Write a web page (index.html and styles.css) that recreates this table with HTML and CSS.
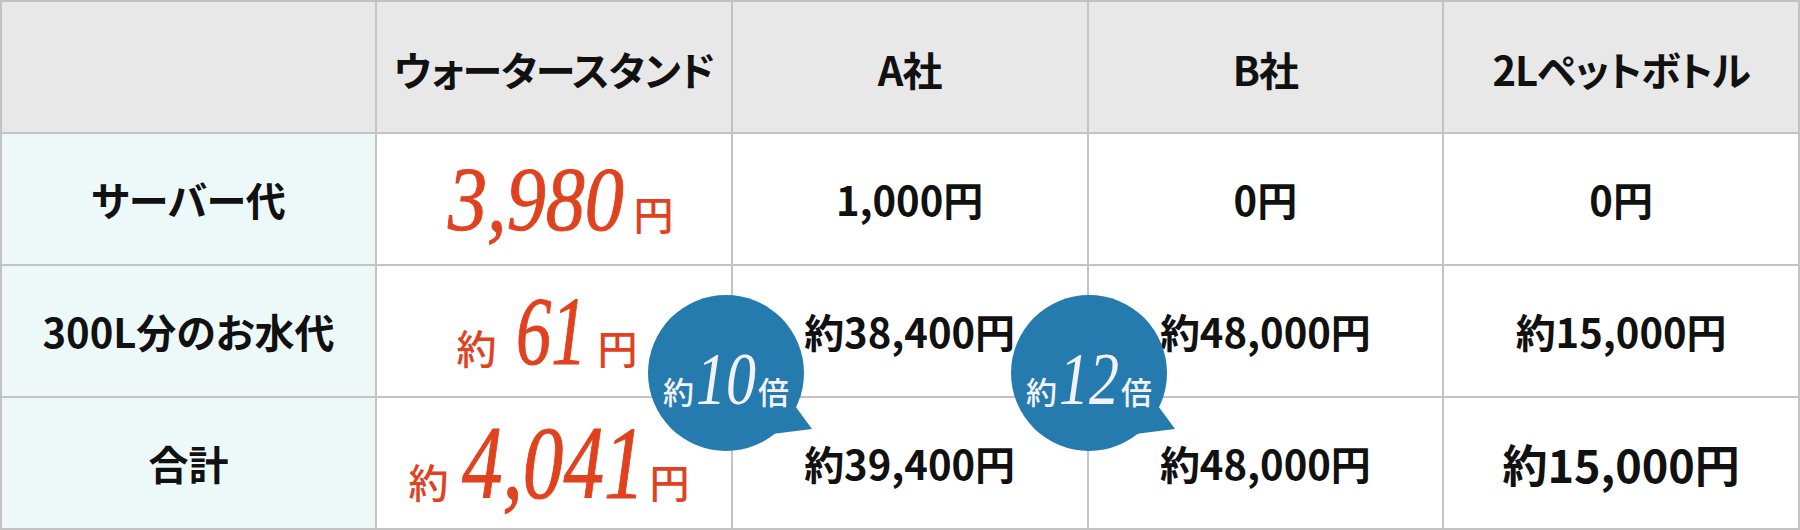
FILE: index.html
```html
<!DOCTYPE html>
<html lang="ja">
<head>
<meta charset="utf-8">
<title>比較表</title>
<link rel="stylesheet" href="styles.css">
</head>
<body>
<div class="wrap">
  <div class="table">
    <div class="cell head"></div>
    <div class="cell head">ウォータースタンド</div>
    <div class="cell head">A社</div>
    <div class="cell head">B社</div>
    <div class="cell head">2Lペットボトル</div>

    <div class="cell label">サーバー代</div>
    <div class="cell hl hl1"><span class="amt"><span class="num n1">3,980</span><span class="yen">円</span></span></div>
    <div class="cell">1,000円</div>
    <div class="cell">0円</div>
    <div class="cell">0円</div>

    <div class="cell label">300L分のお水代</div>
    <div class="cell hl hl2"><span class="amt"><span class="yaku">約</span><span class="num n2">61</span><span class="yen">円</span></span></div>
    <div class="cell">約38,400円</div>
    <div class="cell">約48,000円</div>
    <div class="cell">約15,000円</div>

    <div class="cell label">合計</div>
    <div class="cell hl hl3"><span class="amt"><span class="yaku y3">約</span><span class="num n3">4,041</span><span class="yen">円</span></span></div>
    <div class="cell">約39,400円</div>
    <div class="cell">約48,000円</div>
    <div class="cell big">約15,000円</div>
  </div>

  <div class="bubble b1">
    <svg class="bubble-bg" width="170" height="160" viewBox="0 0 170 160"><circle cx="78" cy="78" r="78"/><polygon points="142,104 164,134 124,139"/></svg>
    <div class="bubble-text"><span class="bk">約</span><span class="bn">10</span><span class="bk">倍</span></div>
  </div>
  <div class="bubble b2">
    <svg class="bubble-bg" width="170" height="160" viewBox="0 0 170 160"><circle cx="78" cy="78" r="78"/><polygon points="142,104 164,134 124,139"/></svg>
    <div class="bubble-text"><span class="bk">約</span><span class="bn">12</span><span class="bk">倍</span></div>
  </div>
</div>
</body>
</html>
```

FILE: styles.css
```css
* { box-sizing: border-box; }
html, body { margin: 0; padding: 0; background: #fff; }
body {
  font-family: "Noto Sans CJK JP", "Noto Sans", sans-serif;
  color: #111;
}
.wrap {
  position: relative;
  width: 1800px;
  height: 530px;
}
.table {
  display: grid;
  grid-template-columns: 373px repeat(4, 1fr);
  grid-template-rows: repeat(4, 130px);
  gap: 2px;
  padding: 2px;
  background: #c3c3c3;
  width: 1800px;
  height: 530px;
}
.cell {
  background: #fff;
  display: flex;
  align-items: center;
  justify-content: center;
  font-size: 40px;
  font-weight: 700;
  font-feature-settings: "palt";
  line-height: 1;
  white-space: nowrap;
}
.head {
  background: #e8e8e8;
  letter-spacing: -1px;
  padding-top: 4px;
}
.label { background: #edf9f9; }
.big { font-size: 45px; }

.hl { color: #e0421f; }
.hl1 { padding-left: 14px; }
.hl2 { padding-right: 14px; }
.hl3 { padding-right: 10px; }
.amt {
  display: inline-flex;
  align-items: baseline;
}
.num {
  display: inline-block;
  font-family: "Liberation Serif", serif;
  font-style: italic;
  font-weight: 400;
  line-height: 1;
  -webkit-text-stroke: 1px currentColor;
  transform-origin: left center;
}
.n1 {
  font-size: 92px;
  transform: scaleX(0.85);
  margin-right: -22px;
}
.n2 {
  font-size: 98px;
  transform: scaleX(0.72);
  margin-right: -17px;
}
.n3 {
  font-size: 104px;
  transform: scaleX(0.78);
  margin-right: -47px;
}
.yen, .yaku {
  font-size: 40px;
  font-weight: 500;
  line-height: 1;
}
.yaku { margin-right: 20px; }
.y3 { margin-right: 14px; }

.bubble {
  position: absolute;
  top: 295px;
  width: 170px;
  height: 160px;
}
.b1 { left: 648px; }
.b2 { left: 1011px; }
.bubble-bg {
  position: absolute;
  left: 0;
  top: 0;
  fill: #267bae;
}
.bubble-text {
  position: absolute;
  left: 0;
  top: 0;
  width: 156px;
  height: 156px;
  display: flex;
  align-items: baseline;
  justify-content: center;
  padding-top: 46px;
  line-height: 1;
  color: #f1f3f8;
}
.bk {
  font-size: 31px;
  font-weight: 500;
}
.bn {
  display: inline-block;
  font-family: "Liberation Serif", serif;
  font-style: italic;
  font-size: 75px;
  transform: scaleX(0.8);
  transform-origin: left center;
  margin: 0 -13px 0 2px;
}
```
